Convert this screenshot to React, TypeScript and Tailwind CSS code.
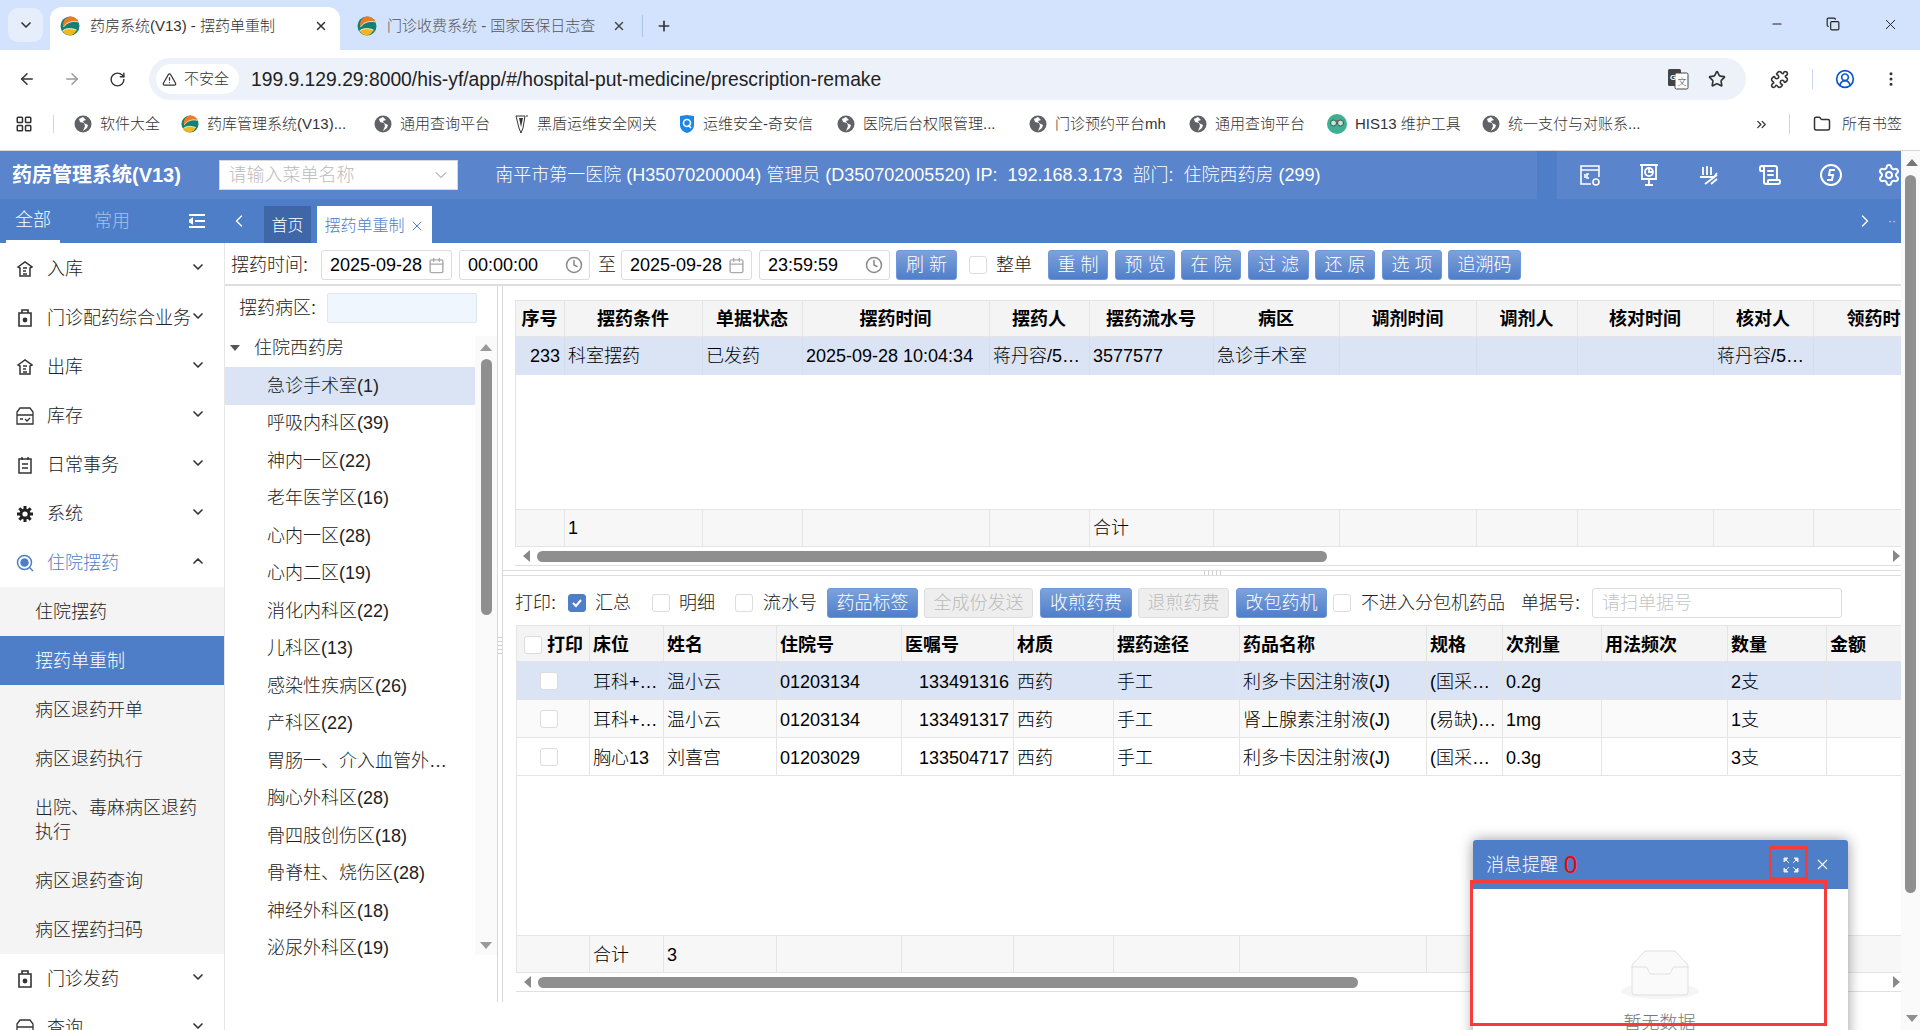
import React from "react";
import {
  ArrowLeft,
  ArrowRight,
  Calendar,
  ChevronDown,
  ChevronLeft,
  ChevronRight,
  ChevronUp,
  ChevronsRight,
  CircleUserRound,
  Clock,
  Copy,
  EllipsisVertical,
  Folder,
  LayoutGrid,
  Minus,
  Plus,
  Puzzle,
  RotateCw,
  ScrollText,
  Settings,
  Star,
  TriangleAlert,
  X,
} from "lucide-react";

const Favicon = ({ size = 20 }: { size?: number }) => (
  <svg width={size} height={size} viewBox="0 0 20 20" className="shrink-0">
    <circle cx="10" cy="10" r="9.500" fill="#15806f" />
    <path d="M10 .5A9.500 9.500 0 0 1 18.500 6C13 4.500 7 6 3.500 11 2 6 5 1.500 10 .5Z" fill="#ef7a22" />
    <path d="M2.500 15C6 12 11 12 16.500 14A9.500 9.500 0 0 1 10 19.500 9.500 9.500 0 0 1 2.500 15Z" fill="#f2b61f" />
    <path d="M3.500 11C7 6 13 4.500 18.500 6M2.500 15C6 12 11 12 16.500 14" fill="none" stroke="#fff" strokeWidth=".8" />
  </svg>
);

const Globe = () => (
  <svg width="18" height="18" viewBox="0 0 18 18" className="shrink-0">
    <circle cx="9" cy="9" r="8.5" fill="#5f6368" />
    <path d="M9 2 5 4l1 3 4 1 1 3-2 5 4-3 1-3-4-2-1-2 3-1Z" fill="#fff" />
  </svg>
);

const ShieldMark = () => (
  <svg width="16" height="20" viewBox="0 0 16 20" className="shrink-0">
    <path d="M1 2 8 1l7 1v9c0 4-3 7-7 8-4-1-7-4-7-8Z" fill="#1b87e6" />
    <circle cx="8" cy="9" r="3.5" fill="none" stroke="#fff" strokeWidth="1.6" />
    <path d="m9 11 3 3" stroke="#fff" strokeWidth="1.6" />
  </svg>
);

const BlackShield = () => (
  <svg width="16" height="20" viewBox="0 0 16 20" className="shrink-0 ml-[5px]">
    <path d="M3 2h9l-2 12-2 5-2-5Z" fill="#fff" stroke="#333" />
    <path d="M6 4h4l-2 9Z" fill="#333" />
    <circle cx="14" cy="2" r="1" fill="#777" />
  </svg>
);

const Owl = () => (
  <svg width="20" height="20" viewBox="0 0 20 20" className="shrink-0">
    <circle cx="10" cy="10" r="10" fill="#3fae93" />
    <circle cx="6.5" cy="9" r="3" fill="#bfe6dc" stroke="#30594f" />
    <circle cx="13.5" cy="9" r="3" fill="#bfe6dc" stroke="#30594f" />
    <path d="m10 9-1.500-3h3Z" fill="#b8562a" />
  </svg>
);

const Translate = () => (
  <svg width="22" height="22" viewBox="0 0 22 22" className="shrink-0">
    <rect x="1" y="1" width="13" height="17" rx="1.500" fill="#444" />
    <rect x="8" y="5" width="13" height="16" rx="1.500" fill="#fff" stroke="#444" />
    <text x="3" y="12" fontSize="8" fontWeight="700" fill="#fff">G</text>
    <text x="10.500" y="17" fontSize="9" fill="#444">文</text>
  </svg>
);

const SlashS = () => (
  <svg width="24" height="24" viewBox="0 0 24 24" fill="none" stroke="#fff" strokeWidth="2">
    <circle cx="12" cy="12" r="10" />
    <path d="M16 7h-5l-1 5h4l-1 5H8" />
  </svg>
);

const CalendarGear = () => (
  <svg width="24" height="24" viewBox="0 0 24 24" fill="none" stroke="#fff" strokeWidth="1.600">
    <path d="M13 21H3V3h18v11" />
    <path d="M3 7h18M7 11v4M11 11h-2v4h2" />
    <circle cx="18" cy="19" r="3" />
  </svg>
);

const BoardClock = () => (
  <svg width="24" height="24" viewBox="0 0 24 24" fill="none" stroke="#fff" strokeWidth="1.800">
    <path d="M3 2h18M5 2v14h14V2M12 16v6M8 22h8" />
    <circle cx="12" cy="9" r="4" />
    <path d="M12 6v3h3" />
  </svg>
);

const HandMark = () => (
  <svg width="24" height="24" viewBox="0 0 24 24" fill="none" stroke="#fff" strokeWidth="1.800">
    <path d="M6 4v8M10 3v9M14 4v8M3 14h14l3-4M8 21l12-9M14 21l6-5" />
  </svg>
);

const StorageIcon = () => (
  <svg width="18" height="18" viewBox="0 0 18 18" fill="none" stroke="#333" strokeWidth="1.300">
    <path d="M1 5 4 1h10l3 4v12H1ZM1 8h16" />
    <path d="M4 12h3M9 12l2 2 3-3" />
  </svg>
);

const HouseBox = () => (
  <svg width="18" height="18" viewBox="0 0 18 18" fill="none" stroke="#333" strokeWidth="1.500">
    <path d="M2 7 9 2l7 5-2 1v8H4V8Z" />
    <path d="M7 8h4M7 11h3M7 14h4" />
  </svg>
);

const BottleIcon = () => (
  <svg width="16" height="18" viewBox="0 0 16 18" fill="none" stroke="#333" strokeWidth="1.600">
    <path d="M5 1h6v3H5ZM2 4h12v13H2Z" />
    <circle cx="8" cy="11" r="1.600" fill="#333" />
  </svg>
);

const NoteIcon = () => (
  <svg width="16" height="18" viewBox="0 0 16 18" fill="none" stroke="#333" strokeWidth="1.500">
    <path d="M2 3h12v14H2ZM5 1v3M11 1v3M5 8h6M5 12h6" />
  </svg>
);

const GearIcon = () => (
  <svg width="18" height="18" viewBox="0 0 18 18">
    <path d="M9 1v16M1 9h16M3.300 3.300l11.400 11.400M14.700 3.300 3.300 14.700" stroke="#222" strokeWidth="3" />
    <circle cx="9" cy="9" r="5.500" fill="#222" />
    <circle cx="9" cy="9" r="2.600" fill="#fff" />
  </svg>
);

const PushIcon = () => (
  <svg width="18" height="18" viewBox="0 0 18 18" fill="none" stroke="#4f7ec9" strokeWidth="1.500">
    <circle cx="8.500" cy="8.500" r="7" />
    <circle cx="8.500" cy="8.500" r="3.500" fill="#4f7ec9" />
    <path d="m13 13 4 4" />
  </svg>
);

const menuTop = [
  { label: "入库", icon: <HouseBox /> },
  { label: "门诊配药综合业务", icon: <BottleIcon /> },
  { label: "出库", icon: <HouseBox /> },
  { label: "库存", icon: <StorageIcon /> },
  { label: "日常事务", icon: <NoteIcon /> },
  { label: "系统", icon: <GearIcon /> },
];

const wards = [
  "急诊手术室(1)",
  "呼吸内科区(39)",
  "神内一区(22)",
  "老年医学区(16)",
  "心内一区(28)",
  "心内二区(19)",
  "消化内科区(22)",
  "儿科区(13)",
  "感染性疾病区(26)",
  "产科区(22)",
  "胃肠一、介入血管外…",
  "胸心外科区(28)",
  "骨四肢创伤区(18)",
  "骨脊柱、烧伤区(28)",
  "神经外科区(18)",
  "泌尿外科区(19)",
];

const MenuRow = ({
  label,
  icon,
  open,
  active,
}: {
  label: string;
  icon: React.ReactNode;
  open?: boolean;
  active?: boolean;
}) => (
  <div className={"h-[49px] flex items-center shrink-0 " + (active ? "text-[#4f7ec9]" : "text-[#222]")}>
    <div className="w-[47px] flex justify-center pl-[6px] pr-[3px]">{icon}</div>
    <span className="w-[145px] whitespace-nowrap">{label}</span>
    <div className="ml-[-2px] mb-[3px] text-[#333]">
      {open ? <ChevronUp size={16} strokeWidth={2.5} /> : <ChevronDown size={16} strokeWidth={2.5} />}
    </div>
  </div>
);

const Field = ({ w, value, icon }: { w: string; value: string; icon: React.ReactNode }) => (
  <div className={"h-[30px] border border-[#dcdcdc] rounded-[3px] flex items-center justify-between pl-[8px] pr-[6px] text-black " + w}>
    <span>{value}</span>
    {icon}
  </div>
);

const Btn = ({ children, w, ml }: { children: React.ReactNode; w: string; ml: string }) => (
  <div className={"h-[30px] rounded-[3px] border border-[#6d98dc] bg-gradient-to-b from-[#7ea2da] to-[#4f7ec9] text-white flex items-center justify-center shrink-0 " + w + " " + ml}>
    {children}
  </div>
);

const OffBtn = ({ children, w, ml }: { children: React.ReactNode; w: string; ml: string }) => (
  <div className={"h-[30px] rounded-[3px] border border-[#dddddd] bg-[#eeeeee] text-[#bbbbbb] flex items-center justify-center shrink-0 " + w + " " + ml}>
    {children}
  </div>
);

const Box = ({ ml, on }: { ml: string; on?: boolean }) => (
  <div className={"w-[18px] h-[18px] rounded-[3px] border shrink-0 flex items-center justify-center " + ml + " " + (on ? "bg-[#4f7ec9] border-[#4f7ec9]" : "bg-white border-[#dcdcdc]")}>
    {on && (
      <svg width="12" height="12" viewBox="0 0 12 12" fill="none" stroke="#fff" strokeWidth="2">
        <path d="m2 6 3 3 5-6" />
      </svg>
    )}
  </div>
);

const HScroll = ({ thumb }: { thumb: string }) => (
  <div className="h-[19px] flex items-center border-b border-[#e0e0e0] pl-[8px] pr-[1px]">
    <div className="w-0 h-0 border-y-[6px] border-y-transparent border-r-[7px] border-r-[#888]" />
    <div className={"h-[11px] ml-[7px] rounded-full bg-[#8f8f8f] " + thumb} />
    <div className="flex-1" />
    <div className="w-0 h-0 border-y-[6px] border-y-transparent border-l-[7px] border-l-[#888]" />
  </div>
);

const topCols = "grid grid-cols-[49px_138px_100px_187px_100px_124px_126px_137px_101px_136px_100px_139px]";
const lowCols = "grid grid-cols-[73px_74px_113px_125px_112px_100px_126px_187px_76px_99px_126px_99px_75px]";
const cell = "border-r border-[#e4e4e4] pl-[3px] pr-[4px] flex items-center overflow-hidden whitespace-nowrap";
const lowCell = cell + " pt-[2px]";

const topHead = ["序号", "摆药条件", "单据状态", "摆药时间", "摆药人", "摆药流水号", "病区", "调剂时间", "调剂人", "核对时间", "核对人", "领药时间"];
const topRow = ["233", "科室摆药", "已发药", "2025-09-28 10:04:34", "蒋丹容/5…", "3577577", "急诊手术室", "", "", "", "蒋丹容/5…", ""];
const topFoot = ["", "1", "", "", "", "合计", "", "", "", "", "", ""];

const lowHead = ["床位", "姓名", "住院号", "医嘱号", "材质", "摆药途径", "药品名称", "规格", "次剂量", "用法频次", "数量", "金额"];
const lowRows = [
  { bg: "bg-[#dbe4f5]", cells: ["耳科+…", "温小云", "01203134", "133491316", "西药", "手工", "利多卡因注射液(J)", "(国采…", "0.2g", "", "2支", ""] },
  { bg: "bg-[#fafafa]", cells: ["耳科+…", "温小云", "01203134", "133491317", "西药", "手工", "肾上腺素注射液(J)", "(易缺)…", "1mg", "", "1支", ""] },
  { bg: "bg-white", cells: ["胸心13", "刘喜宫", "01203029", "133504717", "西药", "手工", "利多卡因注射液(J)", "(国采…", "0.3g", "", "3支", ""] },
];
const lowFoot = ["合计", "3", "", "", "", "", "", "", "", "", "", ""];

const bookmarks = [
  { w: "w-[107px]", icon: <Globe />, label: "软件大全" },
  { w: "w-[193px]", icon: <Favicon size={18} />, label: "药库管理系统(V13)..." },
  { w: "w-[134px]", icon: <Globe />, label: "通用查询平台" },
  { w: "w-[171px]", icon: <BlackShield />, label: "黑盾运维安全网关" },
  { w: "w-[158px]", icon: <ShieldMark />, label: "运维安全-奇安信" },
  { w: "w-[192px]", icon: <Globe />, label: "医院后台权限管理..." },
  { w: "w-[160px]", icon: <Globe />, label: "门诊预约平台mh" },
  { w: "w-[138px]", icon: <Globe />, label: "通用查询平台" },
  { w: "w-[155px]", icon: <Owl />, label: "HIS13 维护工具" },
  { w: "w-[272px]", icon: <Globe />, label: "统一支付与对账系..." },
];

export default function App() {
  return (
    <div className="relative w-[1920px] h-[1030px] overflow-hidden flex flex-col bg-white text-[18px] leading-[24px] font-light text-[#222] font-['Liberation_Sans','Noto_Sans_CJK_SC',sans-serif]">
      {/* browser tabs */}
      <div className="h-[50px] bg-[#d3e3fd] flex items-end shrink-0 relative text-[15px]">
        <div className="w-[35px] h-[34px] ml-[8px] mb-[8px] rounded-[10px] bg-[#e6eefc] flex items-center justify-center">
          <ChevronDown size={16} strokeWidth={2.5} color="#333" />
        </div>
        <div className="w-[290px] h-[43px] ml-[7px] bg-white rounded-t-[12px] flex items-center pl-[10px] pr-[12px] pb-[5px]">
          <Favicon />
          <span className="ml-[10px] flex-1 whitespace-nowrap text-[#333]">药房系统(V13) - 摆药单重制</span>
          <X size={14} strokeWidth={2.5} color="#333" />
        </div>
        <div className="h-[43px] ml-[7px] flex items-center pl-[10px] pb-[5px] text-[#555] shrink-0">
          <Favicon />
          <span className="ml-[10px] w-[212px] shrink-0 whitespace-nowrap">门诊收费系统 - 国家医保日志查</span>
          <X size={14} strokeWidth={2.5} color="#444" className="ml-[13px] shrink-0" />
          <div className="w-px h-[22px] bg-[#a8c3ee] ml-[16px] shrink-0" />
          <Plus size={16} strokeWidth={2.5} color="#333" className="ml-[13px] shrink-0" />
        </div>
        <div className="flex-1" />
        <div className="h-[48px] self-start flex items-center text-[#222]">
          <Minus size={14} strokeWidth={2} />
          <Copy size={14} strokeWidth={2} className="ml-[42px]" />
          <X size={17} strokeWidth={1.4} className="ml-[42px] mr-[21px]" />
        </div>
      </div>

      {/* address bar */}
      <div className="h-[50px] pt-[8px] flex items-center shrink-0 text-[#333]">
        <ArrowLeft size={18} className="ml-[18px]" />
        <ArrowRight size={18} color="#9a9a9a" className="ml-[27px]" />
        <RotateCw size={17} className="ml-[28px]" />
        <div className="w-[1597px] h-[42px] ml-[23px] rounded-full bg-[#edf2fa] flex items-center pl-[7px] pr-[20px]">
          <div className="w-[83px] h-[30px] rounded-full bg-white flex items-center pl-[6px] text-[15px]">
            <TriangleAlert size={15} />
            <span className="ml-[7px]">不安全</span>
          </div>
          <span className="ml-[12px] pt-[2px] text-[19.3px] text-[#222]">199.9.129.29:8000/his-yf/app/#/hospital-put-medicine/prescription-remake</span>
          <div className="flex-1" />
          <Translate />
          <Star size={18} strokeWidth={2.2} className="ml-[19px]" />
        </div>
        <Puzzle size={19} className="ml-[24px]" />
        <div className="w-px h-[20px] bg-[#c8d6ee] ml-[23px]" />
        <CircleUserRound size={20} color="#0b57d0" className="ml-[22px]" />
        <EllipsisVertical size={18} className="ml-[27px]" />
      </div>

      {/* bookmarks */}
      <div className="h-[51px] border-b border-[#d6d6d6] flex items-center shrink-0 text-[15px] text-[#333] pb-[2px]">
        <LayoutGrid size={18} className="ml-[15px]" />
        <div className="w-px h-[18px] bg-[#c8d6ee] ml-[20px] mr-[20px]" />
        {bookmarks.map((b, i) => (
          <div key={i} className={"flex items-center gap-[8px] whitespace-nowrap shrink-0 " + b.w}>
            {b.icon}
            <span>{b.label}</span>
          </div>
        ))}
        <ChevronsRight size={15} className="shrink-0" />
        <div className="w-px h-[20px] bg-[#c8d6ee] ml-[20px] shrink-0" />
        <Folder size={18} className="ml-[23px] shrink-0" />
        <span className="ml-[11px] whitespace-nowrap">所有书签</span>
      </div>

      <div className="flex-1 min-h-0 flex">
        <div className="w-[1901px] flex flex-col min-h-0">
          {/* app header */}
          <div className="h-[48px] bg-[#5a84cb] flex items-center text-white shrink-0">
            <span className="ml-[12px] w-[207px] text-[20px] font-bold whitespace-nowrap">药房管理系统(V13)</span>
            <div className="w-[240px] h-[30px] bg-white border border-[#d8d8d8] flex items-center justify-between pl-[9px] pr-[6px] text-[#bbbbbb]">
              <span>请输入菜单名称</span>
              <ChevronDown size={20} strokeWidth={1.2} color="#888" />
            </div>
            <span className="ml-[37px] w-[1044px] whitespace-pre">南平市第一医院 (H35070200004) 管理员 (D350702005520) IP:  192.168.3.173  部门:  住院西药房 (299)</span>
            <div className="w-[20px] h-full bg-[#4f7ec9]" />
            <div className="w-[21px]" />
            <CalendarGear />
            <div className="ml-[35px]"><BoardClock /></div>
            <div className="ml-[36px]"><HandMark /></div>
            <ScrollText size={24} className="ml-[37px]" />
            <div className="ml-[37px]"><SlashS /></div>
            <Settings size={24} className="ml-[34px]" />
          </div>

          {/* nav bar */}
          <div className="h-[44px] bg-[#4f7ec9] flex shrink-0 text-white">
            <div className="w-[224px] flex items-center pl-[6px] relative">
              <div className="w-[54px] text-center border-b-[3px] border-white h-full flex items-center justify-center">全部</div>
              <span className="ml-[34px] text-[#a9c0e6]">常用</span>
              <svg width="16" height="14" viewBox="0 0 16 14" className="ml-[59px]" fill="none" stroke="#fff" strokeWidth="2">
                <path d="M0 1h16M6 7h10M0 13h16M0 7l3-2v4Z" />
              </svg>
            </div>
            <ChevronLeft size={20} strokeWidth={1.500} className="ml-[5px] self-center" />
            <div className="w-[47px] h-[37px] ml-[15px] self-end bg-[#3f67a8] flex items-center justify-center text-[16px] pt-[3px]">首页</div>
            <div className="w-[115px] h-[37px] ml-[6px] self-end bg-white text-[#4f7ec9] flex items-center justify-center text-[16px] pt-[3px] gap-[4px] whitespace-nowrap">
              摆药单重制
              <X size={16} strokeWidth={1.500} />
            </div>
            <div className="flex-1" />
            <ChevronRight size={20} strokeWidth={1.500} className="self-center" />
            <span className="self-center ml-[13px] mr-[5px] text-[12px] text-[#cddbf2]">··</span>
          </div>

          <div className="flex-1 min-h-0 flex">
            {/* side menu */}
            <div className="w-[225px] border-r border-[#e6e6e6] shrink-0 flex flex-col overflow-hidden pt-px">
              {menuTop.map((m) => (
                <MenuRow key={m.label} label={m.label} icon={m.icon} />
              ))}
              <MenuRow label="住院摆药" icon={<PushIcon />} open active />
              <div className="bg-[#f4f4f4] shrink-0">
                <div className="h-[49px] pl-[35px] flex items-center">住院摆药</div>
                <div className="h-[49px] pl-[35px] flex items-center bg-[#4f7ec9] text-white">摆药单重制</div>
                <div className="h-[49px] pl-[35px] flex items-center">病区退药开单</div>
                <div className="h-[49px] pl-[35px] flex items-center">病区退药执行</div>
                <div className="h-[73px] pl-[35px] pr-[24px] flex items-center">出院、毒麻病区退药执行</div>
                <div className="h-[49px] pl-[35px] flex items-center">病区退药查询</div>
                <div className="h-[49px] pl-[35px] flex items-center">病区摆药扫码</div>
              </div>
              <MenuRow label="门诊发药" icon={<BottleIcon />} />
              <MenuRow label="查询" icon={<StorageIcon />} />
            </div>

            <div className="flex-1 min-w-0 flex flex-col">
              {/* query bar */}
              <div className="h-[43px] border-b-2 border-[#dedede] flex items-center pl-[6px] pt-[3px] shrink-0">
                <span className="w-[90px] whitespace-nowrap">摆药时间:</span>
                <Field w="w-[131px]" value="2025-09-28" icon={<Calendar size={17} color="#aaa" />} />
                <Field w="w-[131px] ml-[7px]" value="00:00:00" icon={<Clock size={18} color="#888" />} />
                <span className="ml-[8px] w-[23px]">至</span>
                <Field w="w-[131px]" value="2025-09-28" icon={<Calendar size={17} color="#aaa" />} />
                <Field w="w-[131px] ml-[7px]" value="23:59:59" icon={<Clock size={18} color="#888" />} />
                <Btn w="w-[61px]" ml="ml-[6px]">刷 新</Btn>
                <Box ml="ml-[12px]" />
                <span className="ml-[9px]">整单</span>
                <Btn w="w-[60px]" ml="ml-[16px]">重 制</Btn>
                <Btn w="w-[60px]" ml="ml-[7px]">预 览</Btn>
                <Btn w="w-[60px]" ml="ml-[6px]">在 院</Btn>
                <Btn w="w-[61px]" ml="ml-[7px]">过 滤</Btn>
                <Btn w="w-[60px]" ml="ml-[6px]">还 原</Btn>
                <Btn w="w-[60px]" ml="ml-[7px]">选 项</Btn>
                <Btn w="w-[73px]" ml="ml-[6px]">追溯码</Btn>
              </div>

              <div className="flex-1 min-h-0 flex">
                {/* ward tree */}
                <div className="w-[272px] shrink-0 flex flex-col">
                  <div className="h-[50px] flex items-center pl-[14px] pb-[6px] shrink-0">
                    <span className="w-[88px] whitespace-nowrap">摆药病区:</span>
                    <div className="w-[150px] h-[30px] rounded-[2px] border border-[#dfe6ef] bg-[#eff6fd]" />
                  </div>
                  <div className="h-[619px] flex shrink-0">
                    <div className="w-[250px] shrink-0">
                      <div className="h-[31px] flex items-center pb-[7px]">
                        <div className="w-0 h-0 ml-[5px] border-x-[5px] border-x-transparent border-t-[6px] border-t-[#555]" />
                        <span className="ml-[14px]">住院西药房</span>
                      </div>
                      {wards.map((w, i) => (
                        <div key={w} className={"h-[37.5px] pl-[42px] flex items-center whitespace-nowrap " + (i === 0 ? "bg-[#dbe4f5]" : "")}>
                          {w}
                        </div>
                      ))}
                    </div>
                    <div className="w-[22px] bg-[#fafafa] flex flex-col items-center pt-[8px] pb-[6px]">
                      <div className="w-0 h-0 border-x-[6px] border-x-transparent border-b-[7px] border-b-[#9a9a9a]" />
                      <div className="w-[11px] h-[256px] mt-[8px] rounded-full bg-[#8f8f8f]" />
                      <div className="flex-1" />
                      <div className="w-0 h-0 border-x-[6px] border-x-transparent border-t-[7px] border-t-[#9a9a9a]" />
                    </div>
                  </div>
                </div>

                {/* splitter */}
                <div className="w-[6px] h-[716px] border-x border-[#d8d8d8] shrink-0 flex flex-col gap-[3px] pt-[351px]">
                  <div className="h-px bg-[#cfcfcf]" />
                  <div className="h-px bg-[#cfcfcf]" />
                  <div className="h-px bg-[#cfcfcf]" />
                  <div className="h-px bg-[#cfcfcf]" />
                  <div className="h-px bg-[#cfcfcf]" />
                </div>

                <div className="flex-1 min-w-0 flex flex-col overflow-hidden">
                  <div className="pl-[12px] pt-[14px] shrink-0">
                    <div className={topCols + " h-[37px] bg-[#f4f4f4] border-y border-l border-[#e4e4e4] font-bold text-black"}>
                      {topHead.map((h) => (
                        <div key={h} className={cell + " justify-center"}>{h}</div>
                      ))}
                    </div>
                    <div className={topCols + " h-[38px] bg-[#dbe4f5] border-l border-[#e4e4e4] text-black"}>
                      {topRow.map((c, i) => (
                        <div key={i} className={"border-r border-[#d5deef] pl-[3px] pr-[4px] flex items-center overflow-hidden whitespace-nowrap " + (i === 0 ? "justify-end" : "")}>{c}</div>
                      ))}
                    </div>
                    <div className="h-[134px] border-l border-[#e4e4e4]" />
                    <div className={topCols + " h-[38px] bg-[#f7f7f7] border-y border-l border-[#e4e4e4] text-black"}>
                      {topFoot.map((c, i) => (
                        <div key={i} className={cell}>{c}</div>
                      ))}
                    </div>
                    <HScroll thumb="w-[790px]" />
                  </div>
                  <div className="h-[6px] mt-[4px] border-y border-[#dedede] flex items-stretch gap-[3px] pl-[701px] shrink-0">
                    <div className="w-px bg-[#cfcfcf]" />
                    <div className="w-px bg-[#cfcfcf]" />
                    <div className="w-px bg-[#cfcfcf]" />
                    <div className="w-px bg-[#cfcfcf]" />
                    <div className="w-px bg-[#cfcfcf]" />
                  </div>

                  {/* lower toolbar */}
                  <div className="h-[49px] pl-[12px] flex items-center shrink-0 whitespace-nowrap pt-[5px]">
                    <span className="w-[41px]">打印:</span>
                    <Box ml="ml-[12px]" on />
                    <span className="ml-[9px]">汇总</span>
                    <Box ml="ml-[21px]" />
                    <span className="ml-[9px]">明细</span>
                    <Box ml="ml-[20px]" />
                    <span className="ml-[10px]">流水号</span>
                    <Btn w="w-[91px]" ml="ml-[10px]">药品标签</Btn>
                    <OffBtn w="w-[109px]" ml="ml-[6px]">全成份发送</OffBtn>
                    <Btn w="w-[92px]" ml="ml-[7px]">收煎药费</Btn>
                    <OffBtn w="w-[91px]" ml="ml-[6px]">退煎药费</OffBtn>
                    <Btn w="w-[91px]" ml="ml-[7px]">改包药机</Btn>
                    <Box ml="ml-[6px]" />
                    <span className="ml-[10px]">不进入分包机药品</span>
                    <span className="ml-[16px]">单据号:</span>
                    <div className="w-[250px] h-[30px] ml-[12px] border border-[#dcdcdc] rounded-[3px] flex items-center pl-[9px] text-[#c4c4c4]">请扫单据号</div>
                  </div>

                  <div className="pl-[13px] flex-1 min-h-0 flex flex-col">
                    <div className={lowCols + " h-[37px] bg-[#f4f4f4] border-y border-l border-[#e4e4e4] font-bold text-black"}>
                      <div className={lowCell + " pl-[7px] gap-[5px]"}>
                        <Box ml="" />
                        打印
                      </div>
                      {lowHead.map((h) => (
                        <div key={h} className={lowCell}>{h}</div>
                      ))}
                    </div>
                    {lowRows.map((r, i) => (
                      <div key={i} className={lowCols + " h-[38px] border-b border-l border-[#e4e4e4] text-black " + r.bg}>
                        <div className={cell + " pl-[23px]"}>
                          <Box ml="" />
                        </div>
                        {r.cells.map((c, j) => (
                          <div key={j} className={lowCell + (j === 3 ? " justify-end" : "")}>{c}</div>
                        ))}
                      </div>
                    ))}
                    <div className="h-[159px] border-l border-[#e4e4e4] shrink-0" />
                    <div className={lowCols + " h-[38px] bg-[#f7f7f7] border-y border-l border-[#e4e4e4] text-black shrink-0"}>
                      <div className={cell} />
                      {lowFoot.map((c, i) => (
                        <div key={i} className={lowCell}>{c}</div>
                      ))}
                    </div>
                    <HScroll thumb="w-[820px]" />
                  </div>
                </div>
              </div>
            </div>
          </div>
        </div>

        {/* page scrollbar */}
        <div className="w-[19px] bg-[#fafafa] flex flex-col items-center pt-[8px]">
          <div className="w-0 h-0 ml-[2px] border-x-[6px] border-x-transparent border-b-[7px] border-b-[#777]" />
          <div className="w-[11px] h-[718px] mt-[9px] rounded-full bg-[#8f8f8f]" />
          <div className="flex-1" />
          <div className="w-0 h-0 mb-[8px] ml-[2px] border-x-[6px] border-x-transparent border-t-[7px] border-t-[#8f8f8f]" />
        </div>
      </div>

      {/* message popup */}
      <div className="absolute left-[1473px] top-[840px] w-[375px] h-[260px] bg-white rounded-t-[3px] shadow-[0_0_14px_rgba(0,0,0,0.4)]">
        <div className="h-[49px] bg-[#4f7ec9] rounded-t-[3px] flex items-center pl-[13px] text-white">
          <span>消息提醒</span>
          <span className="ml-[6px] text-[24px] text-[#ff0000]">0</span>
          <div className="flex-1" />
          <svg width="16" height="16" viewBox="0 0 16 16" fill="#e8eef9" stroke="#e8eef9" className="mr-[15px]">
            <path d="M1 1h4L1 5ZM15 1v4l-4-4ZM1 15v-4l4 4ZM15 15h-4l4-4Z" />
            <path d="m2 2 4 4M14 2l-4 4M2 14l4-4M14 14l-4-4" />
          </svg>
          <X size={17} strokeWidth={1.500} className="mr-[17px]" />
        </div>
        <div className="flex flex-col items-center pt-[61px] pr-[2px]">
          <svg width="80" height="50" viewBox="0 0 80 50">
            <ellipse cx="40" cy="41" rx="39" ry="8" fill="#f5f5f5" />
            <path d="M12 15 25 1h30l13 14v27a3 3 0 0 1-3 3H15a3 3 0 0 1-3-3Z" fill="#fafafa" stroke="#e0e0e0" />
            <path d="M12 17h14c2 0 2 6 5 7h18c3-1 3-7 5-7h14" fill="none" stroke="#e0e0e0" />
          </svg>
          <span className="mt-[11px] text-[#777]">暂无数据</span>
        </div>
      </div>
      <div className="absolute left-[1769px] top-[846px] w-[39px] h-[34px] border-[3px] border-[#f73b3b]" />
      <div className="absolute left-[1470px] top-[880px] w-[357px] h-[146px] border-[3px] border-[#f73b3b]" />
    </div>
  );
}
